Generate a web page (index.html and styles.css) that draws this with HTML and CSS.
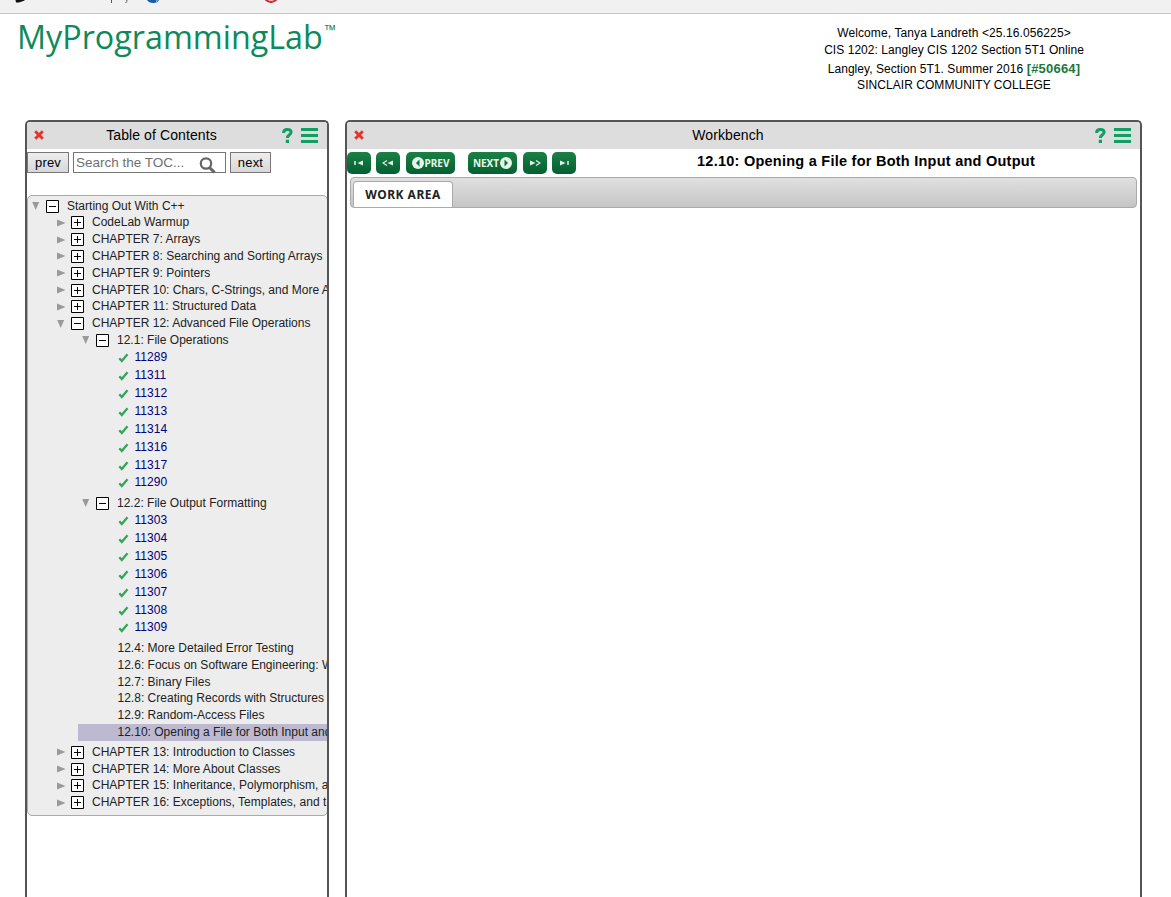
FILE: index.html
```html
<!DOCTYPE html>
<html lang="en">
<head>
<meta charset="utf-8">
<title>MyProgrammingLab</title>
<link rel="stylesheet" href="styles.css">
</head>
<body>
<svg class="defs" width="0" height="0">
  <symbol id="minus" viewBox="0 0 13 13"><path d="M.5.5h12v12H.5z" fill="#fff" stroke="#000"/><path d="M3 6.5h7" stroke="#000"/></symbol>
  <symbol id="plus" viewBox="0 0 13 13"><path d="M.5.5h12v12H.5z" fill="#fff" stroke="#000"/><path d="M3 6.5h7M6.5 3v7" stroke="#000"/></symbol>
  <symbol id="right" viewBox="0 0 9 8"><path d="M0 .5 8.500 4 0 7.500z" fill="#999"/></symbol>
  <symbol id="down" viewBox="0 0 9 8"><path d="M.2 0h7L3.700 8z" fill="#999"/></symbol>
  <symbol id="check" viewBox="0 0 11 10"><path d="M1.300 5.300 3.800 8 9.500 1.300" fill="none" stroke="#34a45b" stroke-width="2.300"/></symbol>
  <symbol id="close" viewBox="0 0 10 10"><path d="M1.200 1.200 8.800 8.800M8.800 1.200 1.200 8.800" stroke="#e8322b" stroke-width="2.900"/></symbol>
  <symbol id="help" viewBox="0 0 11 15"><path d="M1.600 5C1.600 2.600 3 1.500 5.300 1.500 7.900 1.500 9.100 2.700 9.100 4.300 9.100 6.800 5.400 6.800 5.400 10" fill="none" stroke="#109e63" stroke-width="3"/><path d="M3.800 11.700h3.200v3.200H3.800z" fill="#109e63"/></symbol>
  <symbol id="menu" viewBox="0 0 17 15"><path d="M0 1.500h17M0 7.500h17M0 13.500h17" stroke="#109e63" stroke-width="3"/></symbol>
</svg>
<div class="browser-bar"><svg width="300" height="13"><path d="M15.500 0H25l-1 .8-5 1.700h-3z" fill="#111"/><path d="M111.500 0v3M127 0q0 2-1.500 3" stroke="#555" fill="none"/><path d="M147 0h12q-1.500 3-5.500 3Q149 3.200 147 0" fill="#165ca8"/><path d="M157 0q0 1.500-1 2" stroke="#e8f0f8" fill="none" stroke-width=".8"/><path d="M265.500 -.5q5.500 5 11 0" stroke="#c9333a" stroke-width="2.200" fill="none"/></svg></div>
<header class="masthead">
  <h1 class="brand">MyProgrammingLab<span class="tm">™</span></h1>
  <div class="welcome">
    <div class="w1">Welcome, Tanya Landreth &lt;25.16.056225&gt;</div>
    <div>CIS 1202: Langley CIS 1202 Section 5T1 Online</div>
    <div class="w3">Langley, Section 5T1. Summer 2016 <b>[#50664]</b></div>
    <div>SINCLAIR COMMUNITY COLLEGE</div>
  </div>
</header>
<main class="panels">
  <section class="panel toc">
    <div class="panel-head"><svg class="close"><use href="#close"/></svg><span class="panel-title">Table of Contents</span><svg class="help"><use href="#help"/></svg><svg class="menu"><use href="#menu"/></svg></div>
    <div class="search-row">
      <button class="btn prev">prev</button>
      <div class="search"><span>Search the TOC...</span><svg width="18" height="17" viewBox="0 0 18 17"><circle cx="7" cy="6.500" r="5.200" fill="none" stroke="#666" stroke-width="2.200"/><path d="m10.500 10.500 5 5" stroke="#666" stroke-width="3"/></svg></div>
      <button class="btn">next</button>
    </div>
    <div class="tree">
      <div class="row"><svg class="arrow"><use href="#down"/></svg><svg class="box"><use href="#minus"/></svg><span>Starting Out With C++</span></div>
      <div class="level">
        <div class="row"><svg class="arrow"><use href="#right"/></svg><svg class="box"><use href="#plus"/></svg><span>CodeLab Warmup</span></div>
        <div class="row"><svg class="arrow"><use href="#right"/></svg><svg class="box"><use href="#plus"/></svg><span>CHAPTER 7: Arrays</span></div>
        <div class="row"><svg class="arrow"><use href="#right"/></svg><svg class="box"><use href="#plus"/></svg><span>CHAPTER 8: Searching and Sorting Arrays</span></div>
        <div class="row"><svg class="arrow"><use href="#right"/></svg><svg class="box"><use href="#plus"/></svg><span>CHAPTER 9: Pointers</span></div>
        <div class="row"><svg class="arrow"><use href="#right"/></svg><svg class="box"><use href="#plus"/></svg><span>CHAPTER 10: Chars, C-Strings, and More A</span></div>
        <div class="row"><svg class="arrow"><use href="#right"/></svg><svg class="box"><use href="#plus"/></svg><span>CHAPTER 11: Structured Data</span></div>
        <div class="row"><svg class="arrow"><use href="#down"/></svg><svg class="box"><use href="#minus"/></svg><span>CHAPTER 12: Advanced File Operations</span></div>
        <div class="level sections">
          <div class="row"><svg class="arrow"><use href="#down"/></svg><svg class="box"><use href="#minus"/></svg><span>12.1: File Operations</span></div>
          <div class="items">
            <div class="item"><svg><use href="#check"/></svg>11289</div>
            <div class="item"><svg><use href="#check"/></svg>11311</div>
            <div class="item"><svg><use href="#check"/></svg>11312</div>
            <div class="item"><svg><use href="#check"/></svg>11313</div>
            <div class="item"><svg><use href="#check"/></svg>11314</div>
            <div class="item"><svg><use href="#check"/></svg>11316</div>
            <div class="item"><svg><use href="#check"/></svg>11317</div>
            <div class="item"><svg><use href="#check"/></svg>11290</div>
          </div>
          <div class="row"><svg class="arrow"><use href="#down"/></svg><svg class="box"><use href="#minus"/></svg><span>12.2: File Output Formatting</span></div>
          <div class="items">
            <div class="item"><svg><use href="#check"/></svg>11303</div>
            <div class="item"><svg><use href="#check"/></svg>11304</div>
            <div class="item"><svg><use href="#check"/></svg>11305</div>
            <div class="item"><svg><use href="#check"/></svg>11306</div>
            <div class="item"><svg><use href="#check"/></svg>11307</div>
            <div class="item"><svg><use href="#check"/></svg>11308</div>
            <div class="item"><svg><use href="#check"/></svg>11309</div>
          </div>
          <div class="row leaf">12.4: More Detailed Error Testing</div>
          <div class="row leaf">12.6: Focus on Software Engineering: W</div>
          <div class="row leaf">12.7: Binary Files</div>
          <div class="row leaf">12.8: Creating Records with Structures</div>
          <div class="row leaf">12.9: Random-Access Files</div>
          <div class="row leaf selected">12.10: Opening a File for Both Input and</div>
        </div>
        <div class="row"><svg class="arrow"><use href="#right"/></svg><svg class="box"><use href="#plus"/></svg><span>CHAPTER 13: Introduction to Classes</span></div>
        <div class="row"><svg class="arrow"><use href="#right"/></svg><svg class="box"><use href="#plus"/></svg><span>CHAPTER 14: More About Classes</span></div>
        <div class="row"><svg class="arrow"><use href="#right"/></svg><svg class="box"><use href="#plus"/></svg><span>CHAPTER 15: Inheritance, Polymorphism, a</span></div>
        <div class="row"><svg class="arrow"><use href="#right"/></svg><svg class="box"><use href="#plus"/></svg><span>CHAPTER 16: Exceptions, Templates, and t</span></div>
      </div>
    </div>
  </section>
  <section class="panel workbench">
    <div class="panel-head"><svg class="close"><use href="#close"/></svg><span class="panel-title">Workbench</span><svg class="help"><use href="#help"/></svg><svg class="menu"><use href="#menu"/></svg></div>
    <div class="nav-row">
      <div class="nav">
        <button class="go"><svg width="10" height="6"><path d="M1 1v4" stroke="#dff3e4" stroke-width="1.500"/><path d="M9 .5v5L3.500 3z" fill="#dff3e4"/></svg></button>
        <button class="go"><svg width="12" height="6"><path d="M5 .5 1 3l4 2.500" fill="none" stroke="#dff3e4" stroke-width="1.200"/><path d="M11 .5v5L5.500 3z" fill="#dff3e4"/></svg></button>
        <button class="go wide prev-page"><svg width="12" height="12"><circle cx="6" cy="6" r="6" fill="#e4f6e8"/><path d="M7.500 2.500v7L4 6z" fill="#08713b"/></svg><span>PREV</span></button>
        <button class="go wide next-page"><span>NEXT</span><svg width="12" height="12"><circle cx="6" cy="6" r="6" fill="#e4f6e8"/><path d="M4.500 2.500v7L8 6z" fill="#08713b"/></svg></button>
        <button class="go"><svg width="12" height="6"><path d="M1 .5v5L6.500 3z" fill="#dff3e4"/><path d="m7 .5 4 2.500-4 2.500" fill="none" stroke="#dff3e4" stroke-width="1.200"/></svg></button>
        <button class="go"><svg width="10" height="6"><path d="M1 .5v5L6.500 3z" fill="#dff3e4"/><path d="M9 1v4" stroke="#dff3e4" stroke-width="1.500"/></svg></button>
      </div>
      <h2 class="section-title">12.10: Opening a File for Both Input and Output</h2>
    </div>
    <div class="tabs"><div class="tab">WORK AREA</div></div>
  </section>
</main>
</body>
</html>
```

FILE: styles.css
```css
* { box-sizing: border-box; }
body { margin: 0; height: 897px; overflow: hidden; display: flex; flex-direction: column; background: #fff; color: #000; font-family: "Liberation Sans", Arial, sans-serif; font-size: 12px; }
svg { display: block; flex: none; }
.defs { position: absolute; }
button { font-family: inherit; margin: 0; }

.browser-bar { height: 14px; flex: none; background: #f1f1f1; border-bottom: 1px solid #c6c6c6; overflow: hidden; }
.masthead { height: 106px; flex: none; display: flex; justify-content: space-between; }
.brand { margin: 0; padding: 0 0 0 17px; display: flex; font: 400 32.300px/45px "Open Sans", sans-serif; color: #0c8a5b; white-space: nowrap; }
.tm { font-size: 15px; line-height: 33px; margin-left: 2px; }
.welcome { width: 300px; margin-right: 67px; padding-top: 11px; text-align: center; line-height: 17.300px; white-space: nowrap; letter-spacing: .05px; }
.w1 { letter-spacing: .1px; }
.w3 { height: 17.300px; }
.welcome b { color: #20783a; font-size: 13px; letter-spacing: .2px; }

.panels { flex: 1; min-height: 0; display: flex; gap: 16px; padding-left: 25px; }
.panel { border: 2px solid #555; border-bottom: 0; border-radius: 5px 5px 0 0; overflow: hidden; }
.toc { width: 304px; }
.workbench { width: 797px; }
.panel-head { height: 27px; background: #ddd; display: flex; align-items: center; padding: 0 9px 0 7px; }
.close { width: 10px; height: 10px; margin-top: -1px; }
.panel-title { flex: 1; text-align: center; font-size: 14px; letter-spacing: .1px; padding: 0 3px 2px 0; }
.help { width: 11px; height: 15px; margin-right: 8px; }
.menu { width: 17px; height: 15px; }

.search-row { height: 46px; display: flex; gap: 4px; padding-top: 3px; }
.btn { width: 41px; height: 21px; padding: 0; border: 1px solid #777; background: linear-gradient(#eee, #d8d8d8); font-size: 13px; line-height: 19px; letter-spacing: .2px; }
.prev { width: 42px; }
.search { width: 153px; height: 21px; border: 1px solid #777; display: flex; justify-content: space-between; padding: 0 8px 0 2px; font-size: 13.500px; line-height: 19px; color: #707070; white-space: nowrap; }
.search svg { margin-top: 4px; }

.tree { height: 621px; width: 301px; border: 1px solid #aaa; border-radius: 5px; background: #ededed; padding: 1.700px 0 0 5px; overflow: hidden; white-space: nowrap; color: #222; }
.row { height: 16.800px; line-height: 16.800px; display: flex; align-items: center; letter-spacing: .01px; }
.arrow { width: 9px; height: 8px; margin: 0 5px 0 -1px; }
.box { width: 13px; height: 13px; margin-right: 8px; }
.level { padding-left: 25px; }
.sections { padding: 0 0 3.200px 20px; }
.sections > .row { padding-left: 5px; }
.sections > .leaf { padding-left: 39.500px; }
.sections > .selected { background: #bcb9d0; }
.items { padding: .6px 0 2.600px 39.500px; }
.item { height: 17.860px; line-height: 17.860px; display: flex; align-items: center; color: #000080; letter-spacing: .05px; }
.item svg { width: 11px; height: 10px; margin-right: 6px; }

.nav-row { height: 28px; display: flex; }
.nav { display: flex; gap: 5px; padding-top: 3px; }
.go { width: 24px; height: 22px; border: 0; border-radius: 5px; padding: 0; background: linear-gradient(#1a8046, #045f30); color: #e8f7eb; display: flex; align-items: center; justify-content: center; gap: 1px; font: 700 10px/22px "Noto Sans", sans-serif; }
.wide { width: 49px; }
.prev-page { margin-left: 1px; }
.next-page { margin: 0 1px 0 8px; }
.section-title { margin: 0 0 0 121px; font-size: 14.500px; letter-spacing: .25px; line-height: 24px; white-space: nowrap; }
.tabs { height: 31px; margin: 0 3px; border: 1px solid #aaa; border-radius: 4px; background: linear-gradient(#e0e0e0, #c5c5c5); padding: 3px 0 0 2px; }
.tab { width: 100px; height: 26px; border: 1px solid #aaa; border-bottom: 0; border-radius: 4px 4px 0 0; background: #fff; color: #222; text-align: center; font: 700 12px/26px "Noto Sans", sans-serif; letter-spacing: .5px; }
```
